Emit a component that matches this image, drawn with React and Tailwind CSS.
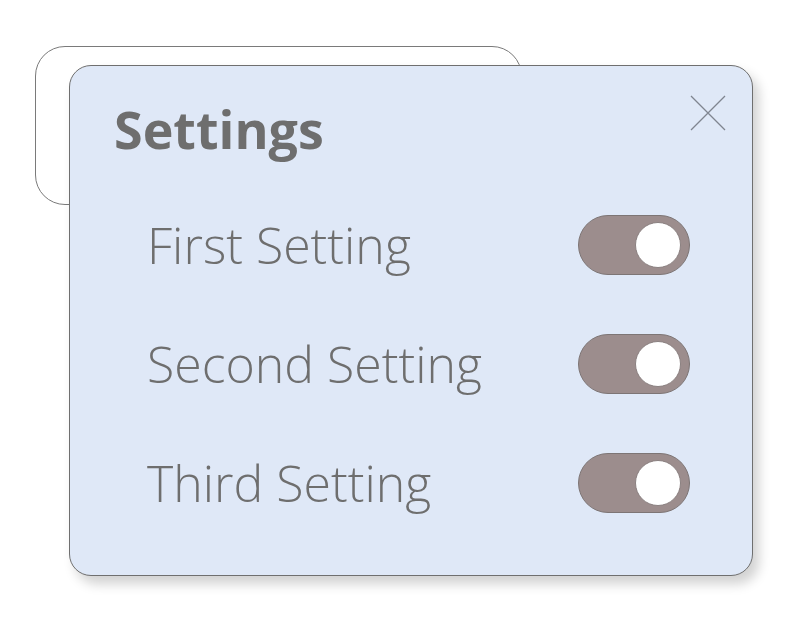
import React from "react";

function Toggle() {
  return (
    <div className="w-[112px] h-[60px] rounded-full bg-[#9c8d8d] border border-[#7d7575] flex items-center justify-end pr-[8px]">
      <div className="w-[46px] h-[46px] rounded-full bg-white border border-[#8a8080]" />
    </div>
  );
}

function Row({ label }) {
  return (
    <div className="flex items-center justify-between h-[119px] pl-[77px] pr-[62px]">
      <span className="text-[50px] font-light text-[#6e6e6e] leading-none">{label}</span>
      <Toggle />
    </div>
  );
}

export default function App() {
  return (
    <div className="relative w-[803px] h-[634px] bg-white overflow-hidden" style={{ fontFamily: '"Open Sans", "Noto Sans", sans-serif' }}>
      <div className="absolute left-[35px] top-[46px] w-[487px] h-[159px] rounded-[30px] border border-[#7a7a7a] bg-white" />
      <div className="absolute left-[69px] top-[65px] w-[684px] h-[511px] rounded-[22px] border border-[#6f6f6f] bg-[#dfe8f7] shadow-[6px_8px_12px_rgba(0,0,0,0.18)]">
        <div className="flex items-start justify-between pl-[44px] pr-[26px] pt-[37px]">
          <h1 className="text-[52px] font-bold text-[#6e6e6e] leading-none">Settings</h1>
          <svg width="36" height="36" viewBox="0 0 36 36" className="mt-[-8px]">
            <path d="M1 1 L35 35 M35 1 L1 35" stroke="#7f8590" strokeWidth="1.3" fill="none" />
          </svg>
        </div>
        <div className="flex flex-col mt-[30px]">
          <Row label="First Setting" />
          <Row label="Second Setting" />
          <Row label="Third Setting" />
        </div>
      </div>
    </div>
  );
}
